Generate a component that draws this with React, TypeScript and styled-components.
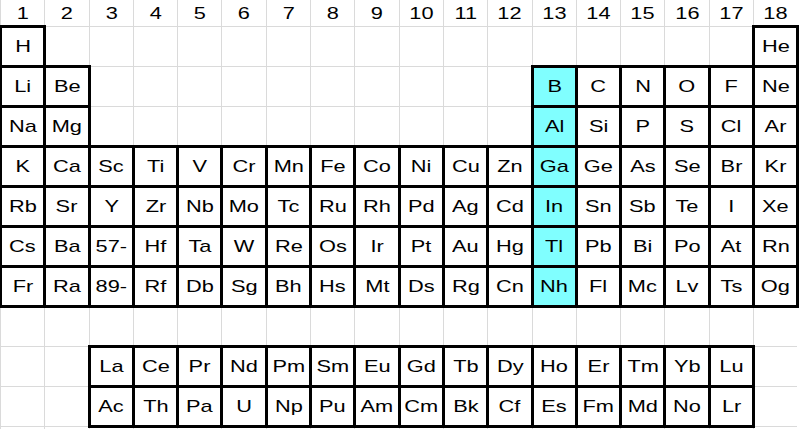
import React from "react";
import styled, { createGlobalStyle } from "styled-components";

const GlobalStyle = createGlobalStyle`
  html, body {
    margin: 0;
    padding: 0;
    background: #ffffff;
    overflow: hidden;
  }
  body {
    font-family: "Liberation Sans", Arial, sans-serif;
  }
`;

const COL_W = 44.3;

const Sheet = styled.div`
  display: grid;
  grid-template-columns: repeat(18, ${COL_W}px);
  grid-template-rows: 26px repeat(11, 40px);
  width: 800px;
  height: 429px;
  overflow: hidden;
  background: #ffffff;
`;

const GridCell = styled.div<{ $row: number; $col: number }>`
  grid-row: ${(p) => p.$row};
  grid-column: ${(p) => p.$col};
  border-left: 1px solid #dadada;
  border-top: ${(p) => (p.$row === 1 ? "none" : "1px solid #dadada")};
  display: flex;
  align-items: center;
  justify-content: center;
  color: #000;
  font-size: 17px;
  line-height: 1;
`;

const ElementCell = styled.div<{ $row: number; $col: number; $hl?: boolean }>`
  grid-row: ${(p) => p.$row};
  grid-column: ${(p) => p.$col};
  position: relative;
  z-index: 1;
  margin: -1px -2px -2px -1px;
  border: 3px solid #000;
  background: ${(p) => (p.$hl ? "#80ffff" : "#ffffff")};
  display: flex;
  align-items: center;
  justify-content: center;
  color: #000;
  font-size: 17px;
  line-height: 1;
`;

const Label = styled.span`
  display: inline-block;
  transform: scaleX(1.28);
  white-space: nowrap;
`;

const mainRows: string[][] = [
  ["H", "", "", "", "", "", "", "", "", "", "", "", "", "", "", "", "", "He"],
  ["Li", "Be", "", "", "", "", "", "", "", "", "", "", "B", "C", "N", "O", "F", "Ne"],
  ["Na", "Mg", "", "", "", "", "", "", "", "", "", "", "Al", "Si", "P", "S", "Cl", "Ar"],
  ["K", "Ca", "Sc", "Ti", "V", "Cr", "Mn", "Fe", "Co", "Ni", "Cu", "Zn", "Ga", "Ge", "As", "Se", "Br", "Kr"],
  ["Rb", "Sr", "Y", "Zr", "Nb", "Mo", "Tc", "Ru", "Rh", "Pd", "Ag", "Cd", "In", "Sn", "Sb", "Te", "I", "Xe"],
  ["Cs", "Ba", "57-", "Hf", "Ta", "W", "Re", "Os", "Ir", "Pt", "Au", "Hg", "Tl", "Pb", "Bi", "Po", "At", "Rn"],
  ["Fr", "Ra", "89-", "Rf", "Db", "Sg", "Bh", "Hs", "Mt", "Ds", "Rg", "Cn", "Nh", "Fl", "Mc", "Lv", "Ts", "Og"],
];

const fRows: string[][] = [
  ["La", "Ce", "Pr", "Nd", "Pm", "Sm", "Eu", "Gd", "Tb", "Dy", "Ho", "Er", "Tm", "Yb", "Lu"],
  ["Ac", "Th", "Pa", "U", "Np", "Pu", "Am", "Cm", "Bk", "Cf", "Es", "Fm", "Md", "No", "Lr"],
];

type Item = { row: number; col: number; sym: string };

function buildElements(): Item[] {
  const items: Item[] = [];
  mainRows.forEach((r, ri) => {
    r.forEach((sym, ci) => {
      if (sym) items.push({ row: ri + 2, col: ci + 1, sym });
    });
  });
  fRows.forEach((r, ri) => {
    r.forEach((sym, ci) => {
      items.push({ row: ri + 10, col: ci + 3, sym });
    });
  });
  return items;
}

export default function App() {
  const elements = buildElements();
  const occupied = new Set(elements.map((e) => `${e.row}-${e.col}`));
  const blanks: { row: number; col: number }[] = [];
  for (let r = 2; r <= 12; r++) {
    for (let c = 1; c <= 18; c++) {
      if (!occupied.has(`${r}-${c}`)) blanks.push({ row: r, col: c });
    }
  }
  return (
    <>
      <GlobalStyle />
      <Sheet>
        {Array.from({ length: 18 }, (_, i) => (
          <GridCell key={`h${i}`} $row={1} $col={i + 1}>
            <Label>{i + 1}</Label>
          </GridCell>
        ))}
        {blanks.map((b) => (
          <GridCell key={`b${b.row}-${b.col}`} $row={b.row} $col={b.col} />
        ))}
        {elements.map((e) => (
          <ElementCell
            key={`e${e.row}-${e.col}`}
            $row={e.row}
            $col={e.col}
            $hl={e.col === 13 && e.row <= 8}
          >
            <Label>{e.sym}</Label>
          </ElementCell>
        ))}
      </Sheet>
    </>
  );
}
